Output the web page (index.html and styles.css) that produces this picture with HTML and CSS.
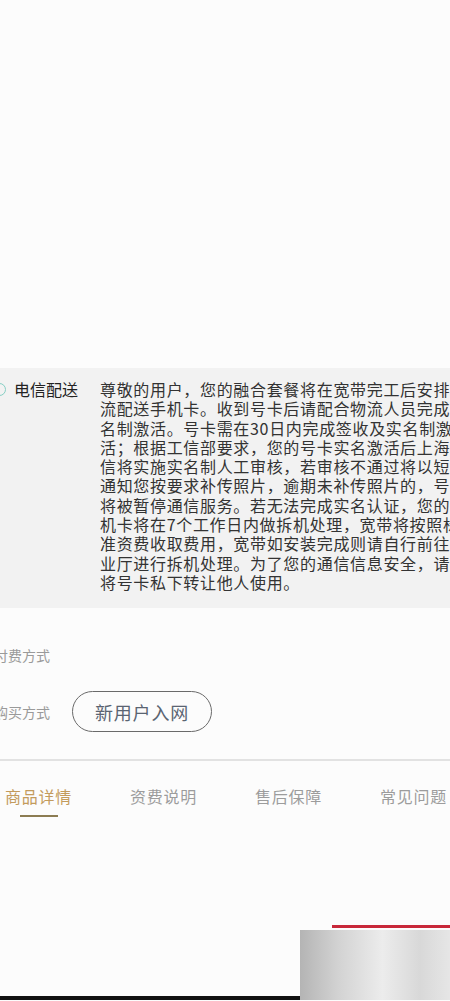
FILE: index.html
```html
<!DOCTYPE html>
<html lang="zh-CN">
  <head>
    <meta charset="UTF-8" />
    <meta name="viewport" content="width=device-width, initial-scale=1.0" />
    <title>商品详情</title>
    <link rel="stylesheet" href="styles.css">
  </head>
  <body>
    <div class="blank"></div>

    <div class="delivery">
      <div class="opt">
        <span class="radio"></span>
        <span class="opt-name">电信配送</span>
      </div>
      <p class="notice">
        尊敬的用户，您的融合套餐将在宽带完工后安排<br />
        流配送手机卡。收到号卡后请配合物流人员完成<br />
        名制激活。号卡需在30日内完成签收及实名制激<br />
        活；根据工信部要求，您的号卡实名激活后上海<br />
        信将实施实名制人工审核，若审核不通过将以短<br />
        通知您按要求补传照片，逾期未补传照片的，号<br />
        将被暂停通信服务。若无法完成实名认证，您的<br />
        机卡将在7个工作日内做拆机处理，宽带将按照标<br />
        准资费收取费用，宽带如安装完成则请自行前往<br />
        业厅进行拆机处理。为了您的通信信息安全，请<br />
        将号卡私下转让他人使用。
      </p>
    </div>

    <div class="choose">
      <div class="row">
        <span class="label">付费方式</span>
      </div>
      <div class="row">
        <span class="label">购买方式</span>
        <span class="pill">新用户入网</span>
      </div>
    </div>

    <ul class="tabs">
      <li class="on">商品详情</li>
      <li>资费说明</li>
      <li>售后保障</li>
      <li>常见问题</li>
    </ul>

    <div class="foot">
      <div class="foot-left"><span class="bar"></span></div>
      <div class="foot-right">
        <span class="red"></span>
        <span class="shade"></span>
      </div>
    </div>
  </body>
</html>
```

FILE: styles.css
```css
* {
  margin: 0;
  padding: 0;
  box-sizing: border-box;
}
ul {
  list-style: none;
}
html,
body {
  width: 450px;
  overflow: hidden;
}
body {
  background: #fcfcfc;
  font-family: "Noto Sans CJK SC", "Noto Sans", sans-serif;
  color: #333;
}
.blank {
  height: 368px;
}

/* 配送说明 */
.delivery {
  display: flex;
  height: 240px;
  padding-top: 12px;
  background: #f2f2f2;
  overflow: hidden;
}
.delivery .opt {
  display: flex;
  align-items: center;
  gap: 8px;
  width: 100px;
  flex-shrink: 0;
  height: 19.3px;
  margin-left: -7px;
}
.delivery .radio {
  width: 13px;
  height: 13px;
  border: 1.5px solid #86cfc4;
  border-radius: 50%;
}
.delivery .opt-name {
  font-size: 16px;
  line-height: 19.3px;
  color: #222;
}
.delivery .notice {
  margin-left: 7px;
  font-size: 16px;
  letter-spacing: 0.67px;
  line-height: 19.3px;
  white-space: nowrap;
  color: #333;
}

/* 选择项 */
.choose {
  padding-top: 26px;
  padding-bottom: 27px;
  border-bottom: 2px solid #e2e2e2;
}
.choose .row {
  display: flex;
  align-items: center;
  gap: 22px;
  height: 41px;
}
.choose .row + .row {
  margin-top: 16px;
}
.choose .label {
  margin-left: -6px;
  font-size: 14px;
  color: #9a9a9a;
}
.choose .pill {
  display: flex;
  align-items: center;
  height: 41px;
  padding: 0 22px;
  border: 1.5px solid #6a6a6a;
  border-radius: 21px;
  font-size: 18px;
  letter-spacing: 0.8px;
  color: #5a6472;
}

/* tabs */
.tabs {
  display: flex;
  margin-left: -24px;
  padding-top: 24px;
}
.tabs li {
  display: flex;
  flex-direction: column;
  align-items: center;
  width: 125px;
  flex-shrink: 0;
  font-size: 16px;
  letter-spacing: 0.7px;
  line-height: 22px;
  color: #9c9c9c;
}
.tabs li.on {
  color: #c39b5c;
}
.tabs li.on::after {
  content: "";
  width: 38px;
  height: 2px;
  margin-top: 8px;
  background: #8c7c52;
}

/* 底部 */
.foot {
  display: flex;
  height: 75px;
  margin-top: 108px;
}
.foot-left {
  display: flex;
  align-items: flex-end;
  width: 300px;
}
.foot-left .bar {
  width: 100%;
  height: 4px;
  background: #111;
}
.foot-right {
  display: flex;
  flex-direction: column;
  gap: 2px;
  width: 150px;
}
.foot-right .red {
  height: 3px;
  margin-left: 32px;
  background: #c8283a;
}
.foot-right .shade {
  flex: 1;
  background: linear-gradient(90deg, #b4b4b4 0%, #d2d2d2 25%, #ececec 55%, #d8d8d8 80%, #e6e6e6 100%);
}
```
